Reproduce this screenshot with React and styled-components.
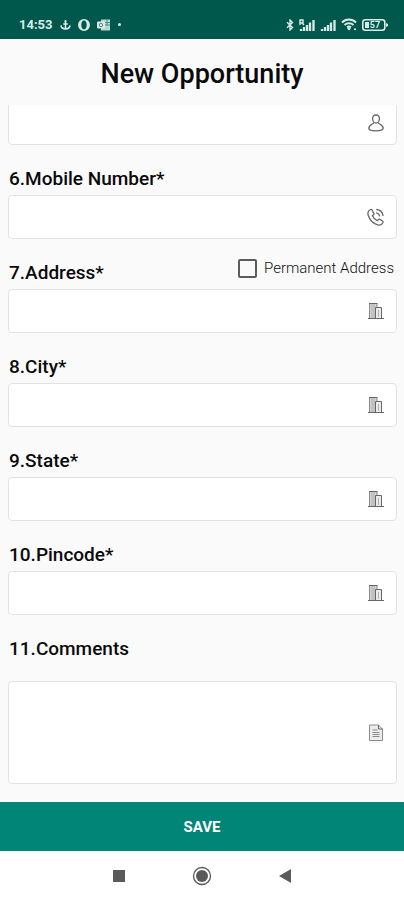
import React from 'react';
import styled, { createGlobalStyle } from 'styled-components';

const GlobalStyle = createGlobalStyle`
  * {
    box-sizing: border-box;
  }
  body {
    margin: 0;
    background: #fafafa;
    color: #0a0a0a;
    font-family: Roboto, "Liberation Sans", sans-serif;
  }
`;

const Screen = styled.div`
  min-height: 100vh;
  display: flex;
  flex-direction: column;
`;

const StatusBar = styled.div`
  height: 39px;
  padding: 10px 16px 0 19px;
  display: flex;
  align-items: center;
  justify-content: space-between;
  background-color: #00574b;
  color: #d9ebe8;
`;

const StatusGroup = styled.div`
  display: flex;
  align-items: center;
  gap: ${(props) => props.$gap}px;
`;

const Time = styled.span`
  font-size: 13px;
  font-weight: 700;
`;

const Header = styled.header`
  height: 66px;
  padding-top: 4px;
  display: flex;
  align-items: center;
  justify-content: center;
`;

const Title = styled.h1`
  margin: 0;
  font-size: 27px;
  font-weight: 500;
  line-height: 32px;
`;

const Form = styled.form`
  flex: 1;
  display: flex;
  flex-direction: column;
`;

const Fields = styled.div`
  flex: 1;
  padding: 0 7px 18px 8px;
  overflow: hidden;
`;

/* the list is scrolled, so the first box slides under the header */
const FieldList = styled.div`
  margin-top: -4px;
`;

const LabelRow = styled.div`
  height: ${(props) => (props.$tall ? 66 : 50)}px;
  padding: 22px 3px 0 1px;
  display: flex;
  justify-content: space-between;
`;

const Label = styled.label`
  font-size: 19px;
  font-weight: 500;
  line-height: 24px;
`;

const CheckLabel = styled.label`
  display: flex;
  align-items: center;
  gap: 7px;
  height: 14px;
  font-size: 15px;
  font-weight: 300;
  color: #111;
`;

const Checkbox = styled.input`
  appearance: none;
  width: 19px;
  height: 19px;
  margin: 0;
  border: 2px solid #5c5c5c;
  border-radius: 2px;
  background-color: #fafafa;

  &:checked {
    background-color: #008577;
  }
`;

const Control = styled.div`
  display: flex;
  align-items: center;
  padding-right: 12px;
  background-color: white;
  border: 1px solid #e2e2e2;
  border-radius: 4px;
  color: #666;
`;

const Input = styled.input`
  flex: 1;
  min-width: 0;
  height: 42px;
  padding: 0 12px;
  border: none;
  outline: none;
  background: transparent;
  font: inherit;
`;

const TextArea = styled.textarea`
  flex: 1;
  min-width: 0;
  height: 101px;
  padding: 12px;
  border: none;
  outline: none;
  resize: none;
  background: transparent;
  font: inherit;
`;

const SaveButton = styled.button`
  height: 49px;
  border: none;
  background-color: #008577;
  color: white;
  font-family: inherit;
  font-size: 15px;
  font-weight: 700;
  cursor: pointer;
`;

const NavBar = styled.nav`
  height: 49px;
  padding: 0 77px;
  display: flex;
  align-items: center;
  justify-content: space-between;
  background-color: white;
`;

const NavButton = styled.button`
  width: 84px;
  height: 49px;
  padding: 0;
  display: flex;
  align-items: center;
  justify-content: center;
  border: none;
  background: none;
  color: #5a5a5a;
`;

const UserIcon = () => (
  <svg width="16" height="18" viewBox="0 0 16 18" fill="none" stroke="currentColor" strokeWidth="1.3">
    <path d="M8 1C5.7 1 4.400 2.700 4.600 5C4.700 7.300 6.200 9.200 8 9.200C9.800 9.200 11.300 7.300 11.400 5C11.600 2.700 10.300 1 8 1Z" />
    <path d="M5.800 8.500C5.800 10.300 .8 10.500 .8 14.200C.8 16 3.500 16.800 8 16.800C12.500 16.800 15.200 16 15.200 14.200C15.200 10.500 10.200 10.300 10.200 8.500" />
  </svg>
);

const PhoneIcon = () => (
  <svg width="17" height="18" viewBox="0 0 17 18" fill="none" stroke="currentColor" strokeWidth="1.3" strokeLinejoin="round">
    <path d="M3.500 1.500C1.200 2.600.4 4.600 1.200 7.200C2.700 12 6.200 15.500 10.800 16.900C13 17.500 15 16.600 16 14.500C16.200 13.900 16 13.400 15.500 13L12.800 11.300C12.200 11 11.700 11.100 11.300 11.600L10.300 12.700C8 11.700 6.300 10 5.400 7.800L6.500 6.700C7 6.300 7.100 5.800 6.700 5.200L5 2C4.600 1.300 4.100 1.200 3.500 1.500Z" />
    <path d="M9 4.800C11.200 5 12.400 6.200 12.600 8.400M9.300 1.500C13.400 1.800 15.700 4 16 8" />
  </svg>
);

const BuildingIcon = () => (
  <svg width="16" height="18" viewBox="0 0 16 18" fill="none" stroke="currentColor">
    <path d="M1.500 1.500H9V16.500H1.500Z" fill="#d4d4d4" stroke="#8a8a8a" />
    <path d="M7.500 5.500H13.500V16.500H7.500Z" fill="#ececec" />
    <path d="M4 2V16M6 2V16M10.500 8V15" stroke="#b0b0b0" />
    <path d="M0 16.500H16M1 1.500H9.500" />
  </svg>
);

const NoteIcon = () => (
  <svg width="16" height="18" viewBox="0 0 16 18" fill="none" stroke="#8c8c8c">
    <path d="M1.500 1H10.500L14.500 5V16.500H1.500Z" fill="#ececec" strokeLinejoin="round" />
    <path d="M10.500 1V5H14.500" stroke="#666" />
    <path d="M4.500 6H9.500M4.500 8.500H11.500M4.500 10.500H11.500M4.500 12.500H11.500" />
  </svg>
);

const AnchorIcon = () => (
  <svg width="11" height="12" viewBox="0 0 12 12" fill="none" stroke="currentColor" strokeWidth="1.700">
    <circle cx="6" cy="1.800" r="1.200" fill="currentColor" stroke="none" />
    <path d="M6 2V10M3.500 5H8.500M1 6.500C1.300 9 3 10.300 6 10.300C9 10.300 10.700 9 11 6.500" />
  </svg>
);

const OperaIcon = () => (
  <svg width="12" height="12" viewBox="0 0 12 12">
    <path fillRule="evenodd" fill="currentColor" d="M6 0A6 6 0 1 1 6 12A6 6 0 1 1 6 0ZM6 1.600C4.200 1.600 3.300 3.600 3.300 6C3.300 8.400 4.200 10.400 6 10.400C7.800 10.400 8.700 8.400 8.700 6C8.700 3.600 7.800 1.600 6 1.600Z" />
  </svg>
);

const OutlookIcon = () => (
  <svg width="14" height="12" viewBox="0 0 14 12">
    <path d="M4 0.500H13V11.500H4Z" fill="#b9d8d3" />
    <path d="M8 3.500H13M8 6H13M10 1V7" stroke="#4d8e85" />
    <rect y="2.500" width="8" height="7" rx="1" fill="currentColor" />
    <circle cx="4" cy="6" r="1.700" fill="none" stroke="#4d8e85" />
  </svg>
);

const BluetoothIcon = () => (
  <svg width="8" height="12" viewBox="0 0 8 12" fill="none" stroke="currentColor" strokeWidth="1.400">
    <path d="M1 3.300L6.500 8.500L4 11V1L6.500 3.500L1 8.700" />
  </svg>
);

const SignalIcon = ({ tag }) => (
  <svg width="16" height="12" viewBox="0 0 16 12" fill="none" stroke="currentColor">
    <path strokeWidth="2.300" d="M2 12V10M5 12V8M8 12V6M11 12V3.500M14.500 12V1" />
    {tag && <path strokeWidth="1.400" d="M1 6V1H4V4H1M3 4L5 6" />}
  </svg>
);

const WifiIcon = () => (
  <svg width="16" height="13" viewBox="0 0 16 13" fill="none" stroke="currentColor" strokeWidth="1.900">
    <path d="M1 4.500C5 .5 11 .5 15 4.500M3.500 7C6 4.700 10 4.700 12.500 7M6 9.300C7.200 8.300 8.800 8.300 10 9.300" />
    <path d="M8 9L10 10.500L8 12.500L6 10.500ZM13 10.500H15V12H13Z" fill="currentColor" stroke="none" />
  </svg>
);

const BatteryIcon = () => (
  <svg width="26" height="12" viewBox="0 0 26 12">
    <rect x=".8" y=".8" width="22" height="10.400" rx="2.500" fill="none" stroke="currentColor" strokeWidth="1.600" />
    <path d="M3 3H7V9H3ZM24 4L26 5V7L24 8Z" fill="currentColor" />
    <text x="13" y="9" textAnchor="middle" fontSize="9" fontWeight="700" fill="currentColor">57</text>
  </svg>
);

const DotIcon = () => (
  <svg width="3" height="3">
    <circle cx="1.500" cy="1.500" r="1.500" fill="currentColor" />
  </svg>
);

const rows = [
  { id: 'mobile', label: '6.Mobile Number*', type: 'tel', icon: <PhoneIcon /> },
  { id: 'address', label: '7.Address*', icon: <BuildingIcon />, permanent: true },
  { id: 'city', label: '8.City*', icon: <BuildingIcon /> },
  { id: 'state', label: '9.State*', icon: <BuildingIcon /> },
  { id: 'pincode', label: '10.Pincode*', icon: <BuildingIcon /> },
];

const App = () => {
  return (
    <Screen>
      <GlobalStyle />
      <StatusBar>
        <StatusGroup $gap={7}>
          <Time>14:53</Time>
          <AnchorIcon />
          <OperaIcon />
          <OutlookIcon />
          <DotIcon />
        </StatusGroup>
        <StatusGroup $gap={5}>
          <BluetoothIcon />
          <SignalIcon tag />
          <SignalIcon />
          <WifiIcon />
          <BatteryIcon />
        </StatusGroup>
      </StatusBar>
      <Header>
        <Title>New Opportunity</Title>
      </Header>
      <Form onSubmit={(e) => e.preventDefault()}>
        <Fields>
          <FieldList>
            <Control>
              <Input id="name" aria-label="Name" />
              <UserIcon />
            </Control>
            {rows.map((row) => (
              <React.Fragment key={row.id}>
                <LabelRow>
                  <Label htmlFor={row.id}>{row.label}</Label>
                  {row.permanent && (
                    <CheckLabel>
                      <Checkbox type="checkbox" />
                      Permanent Address
                    </CheckLabel>
                  )}
                </LabelRow>
                <Control>
                  <Input id={row.id} type={row.type || 'text'} />
                  {row.icon}
                </Control>
              </React.Fragment>
            ))}
            <LabelRow $tall>
              <Label htmlFor="comments">11.Comments</Label>
            </LabelRow>
            <Control>
              <TextArea id="comments" />
              <NoteIcon />
            </Control>
          </FieldList>
        </Fields>
        <SaveButton type="submit">SAVE</SaveButton>
      </Form>
      <NavBar>
        <NavButton aria-label="Recent apps">
          <svg width="12" height="12">
            <rect width="12" height="12" fill="currentColor" />
          </svg>
        </NavButton>
        <NavButton aria-label="Home">
          <svg width="20" height="20">
            <circle cx="10" cy="10" r="8.500" fill="none" stroke="currentColor" strokeWidth="1.300" />
            <circle cx="10" cy="10" r="6" fill="currentColor" />
          </svg>
        </NavButton>
        <NavButton aria-label="Back">
          <svg width="12" height="14">
            <path d="M12 0V14L0 7Z" fill="currentColor" />
          </svg>
        </NavButton>
      </NavBar>
    </Screen>
  );
};

export default App;
